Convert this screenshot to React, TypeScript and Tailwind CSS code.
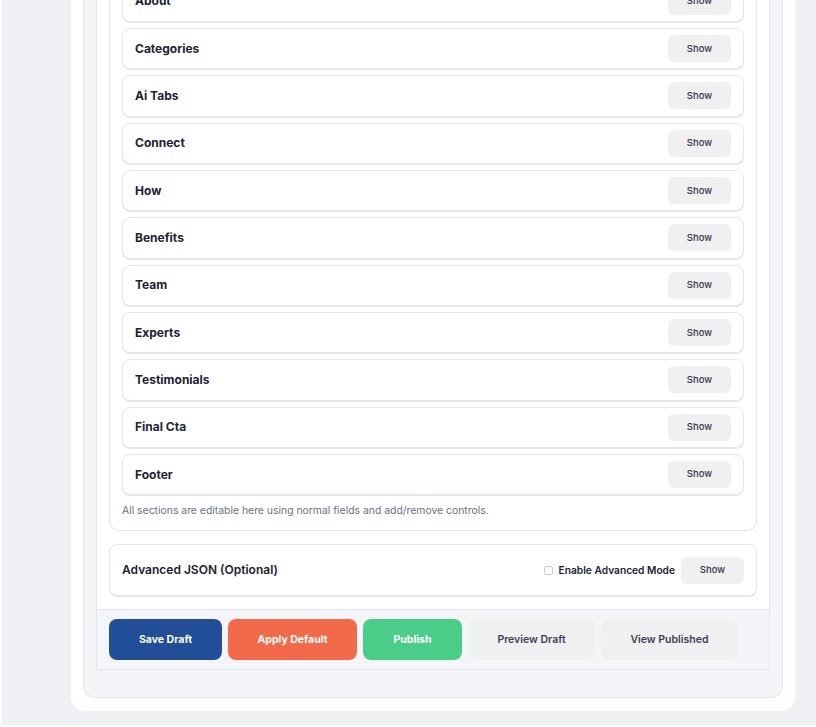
import { useState } from 'react'

const sections = [
  'About',
  'Categories',
  'Ai Tabs',
  'Connect',
  'How',
  'Benefits',
  'Team',
  'Experts',
  'Testimonials',
  'Final Cta',
  'Footer',
]

const showButton =
  'flex h-[27px] w-[63px] items-center justify-center rounded-[6px] bg-[#f0f0f1] text-[9.5px] font-medium text-[#33384a]'

function SectionRow({ title }: { title: string }) {
  return (
    <div className="flex h-[41.33px] items-center justify-between rounded-[8px] border border-[#e4e7ee] bg-white pl-[12px] pr-[12px] shadow-[0_1px_0_#e3e6ee]">
      <span className="text-[12px] font-bold text-[#1c2233]">{title}</span>
      <button type="button" className={showButton}>
        Show
      </button>
    </div>
  )
}

export default function App() {
  const [advanced, setAdvanced] = useState(false)

  return (
    <div
      className="h-[727px] overflow-hidden bg-white pb-[2px] pl-[2px]"
      style={{ fontFamily: 'Inter, "Noto Sans", sans-serif' }}
    >
      <div className="flow-root h-full bg-[#eff0f4] pl-[69px] pr-[21px]">
        <div className="-mt-[19.33px] rounded-b-[14px] bg-white px-[12px] pb-[13px]">
          <div className="rounded-b-[12px] border-x border-b border-[#e1e5ee] bg-[#f4f5f9] px-[12px] pb-[27px]">
            <div className="border-x border-b border-[#e1e5ee] bg-white">
              <div className="px-[12px] pb-[13px]">
                <div className="rounded-b-[10px] border-x border-b border-[#e1e5ee] px-[12px] pb-[12px]">
                  <div className="flex flex-col gap-[6px]">
                    {sections.map((s) => (
                      <SectionRow key={s} title={s} />
                    ))}
                  </div>
                  <p className="mt-[8px] text-[10.4px] leading-[15px] text-[#6b7080]">
                    All sections are editable here using normal fields and add/remove controls.
                  </p>
                </div>

                <div className="mt-[13px] flex h-[52px] items-center justify-between rounded-[8px] border border-[#e4e7ee] bg-white px-[12px] shadow-[0_1px_0_#e3e6ee]">
                  <span className="text-[12px] font-semibold text-[#1c2233]">
                    Advanced JSON (Optional)
                  </span>
                  <div className="flex items-center">
                    <label className="flex items-center gap-[6px] text-[10.2px] font-semibold text-[#1c2233]">
                      <input
                        type="checkbox"
                        checked={advanced}
                        onChange={(e) => setAdvanced(e.target.checked)}
                        className="h-[9px] w-[9px] appearance-none rounded-[2px] border border-[#c9cdd6] bg-white"
                      />
                      Enable Advanced Mode
                    </label>
                    <button type="button" className={`${showButton} ml-[6px] h-[26px]`}>
                      Show
                    </button>
                  </div>
                </div>
              </div>

              <div className="flex gap-[6px] border-t border-[#e1e5ee] bg-[#f4f5f9] px-[12px] py-[9px]">
                <button
                  type="button"
                  className="h-[41px] w-[113px] rounded-[8px] bg-[#214e96] text-[10.5px] font-bold text-white"
                >
                  Save Draft
                </button>
                <button
                  type="button"
                  className="h-[41px] w-[129px] rounded-[8px] bg-[#f26a4a] text-[10.5px] font-bold text-white"
                >
                  Apply Default
                </button>
                <button
                  type="button"
                  className="h-[41px] w-[99px] rounded-[8px] bg-[#4bcd8a] text-[10.5px] font-bold text-white"
                >
                  Publish
                </button>
                <button
                  type="button"
                  className="h-[41px] w-[127px] rounded-[8px] bg-[#f0f0f1] text-[10.5px] font-semibold text-[#3b4052]"
                >
                  Preview Draft
                </button>
                <button
                  type="button"
                  className="h-[41px] w-[137px] rounded-[8px] bg-[#f0f0f1] text-[10.5px] font-semibold text-[#3b4052]"
                >
                  View Published
                </button>
              </div>
            </div>
          </div>
        </div>
      </div>
    </div>
  )
}
